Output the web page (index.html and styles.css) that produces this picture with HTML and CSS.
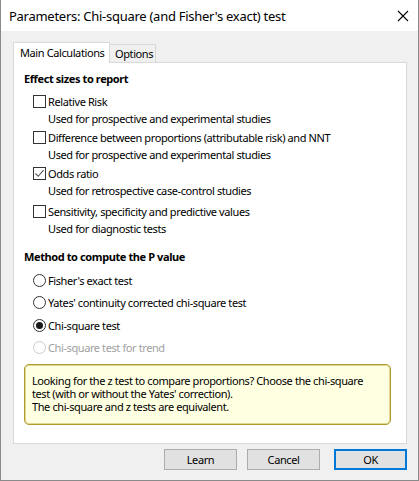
FILE: index.html
```html
<!DOCTYPE html>
<html>
<head>
<meta charset="utf-8">
<link rel="stylesheet" href="styles.css">
</head>
<body>
<div class="window">
  <div class="titlebar">
    <span class="title">Parameters: Chi-square (and Fisher's exact) test</span>
    <svg class="close" width="12" height="12" viewBox="0 0 12 12"><path d="M1 1 L11 11 M11 1 L1 11" stroke="#000" stroke-width="1.1" fill="none"/></svg>
  </div>
  <div class="client">
    <div class="tabs">
      <div class="tab active">Main Calculations</div>
      <div class="tab">Options</div>
    </div>
    <div class="panel">
      <div class="heading">Effect sizes to report</div>
      <div class="group">
        <div class="row"><span class="check"></span>Relative Risk</div>
        <div class="desc">Used for prospective and experimental studies</div>
      </div>
      <div class="group">
        <div class="row"><span class="check"></span>Difference between proportions (attributable risk) and NNT</div>
        <div class="desc">Used for prospective and experimental studies</div>
      </div>
      <div class="group">
        <div class="row"><span class="check checked"><svg width="11" height="11" viewBox="0 0 11 11"><path d="M1.5 5.5 L4.2 8.3 L9.6 2.2" stroke="#555" stroke-width="1.1" fill="none"/></svg></span>Odds ratio</div>
        <div class="desc">Used for retrospective case-control studies</div>
      </div>
      <div class="group last">
        <div class="row"><span class="check"></span>Sensitivity, specificity and predictive values</div>
        <div class="desc">Used for diagnostic tests</div>
      </div>
      <div class="heading second">Method to compute the P value</div>
      <div class="radios">
        <div class="radio-row"><span class="radio"></span>Fisher's exact test</div>
        <div class="radio-row"><span class="radio"></span>Yates' continuity corrected chi-square test</div>
        <div class="radio-row"><span class="radio on"></span>Chi-square test</div>
        <div class="radio-row disabled"><span class="radio"></span>Chi-square test for trend</div>
      </div>
      <div class="note">
        <div class="line">Looking for the z test to compare proportions? Choose the chi-square</div>
        <div class="line">test (with or without the Yates' correction).</div>
        <div class="line">The chi-square and z tests are equivalent.</div>
      </div>
    </div>
    <div class="buttons">
      <button class="btn">Learn</button>
      <button class="btn">Cancel</button>
      <button class="btn default">OK</button>
    </div>
  </div>
</div>
</body>
</html>
```
FILE: styles.css
```css
* { box-sizing: border-box; }
html, body { margin: 0; padding: 0; }
body {
  width: 419px;
  height: 481px;
  font-family: "Noto Sans", "Open Sans", sans-serif;
  font-size: 11px;
  letter-spacing: -0.4px;
  color: #000;
  background: #f0f0f0;
}
.window {
  width: 419px;
  height: 481px;
  border-left: 1px solid #8a8a8a;
  border-right: 1px solid #8a8a8a;
  border-bottom: 1px solid #8a8a8a;
  display: flex;
  flex-direction: column;
  background: #f0f0f0;
}
.titlebar {
  height: 31px;
  background: #fff;
  display: flex;
  align-items: center;
  padding-left: 8px;
  padding-right: 9px;
  flex: none;
}
.title {
  font-size: 13px;
  letter-spacing: -0.27px;
  flex: 1;
  white-space: nowrap;
}
.close { display: block; }
.client {
  flex: 1;
  display: flex;
  flex-direction: column;
  padding: 11px 11px 0 12px;
}
.tabs {
  display: flex;
  align-items: flex-end;
  height: 20px;
  position: relative;
  z-index: 1;
}
.tab {
  height: 18px;
  width: 47px;
  padding: 0 0 0 5px;
  border: 1px solid #d9d9d9;
  border-bottom: none;
  background: #f0f0f0;
  line-height: 17px;
  white-space: nowrap;
  margin-left: -1px;
}
.tab.active {
  height: 21px;
  width: 97px;
  margin-bottom: -1px;
  margin-left: 0;
  background: #fff;
  padding: 0 0 0 6px;
  line-height: 19px;
}
.panel {
  height: 382px;
  width: 394px;
  background: #fff;
  border: 1px solid #d9d9d9;
  padding: 8px 0 0 10px;
}
.heading {
  font-weight: bold;
  line-height: 16px;
  height: 16px;
  margin-bottom: 6px;
}
.group { margin-bottom: 2px; }
.group.last { margin-top: 4px; }
.row, .desc {
  height: 17px;
  line-height: 17px;
  white-space: nowrap;
}
.row { display: flex; align-items: center; padding-left: 9px; }
.desc { padding-left: 24px; }
.check {
  width: 13px;
  height: 13px;
  border: 1px solid #333;
  background: #fff;
  margin-right: 2px;
  flex: none;
  display: flex;
  align-items: center;
  justify-content: center;
}
.check svg { display: block; }
.heading.second { margin-top: 12px; margin-bottom: 4px; }
.radio-row {
  height: 22.5px;
  display: flex;
  align-items: center;
  padding-left: 9px;
  white-space: nowrap;
}
.radio {
  width: 13px;
  height: 13px;
  border: 1px solid #333;
  border-radius: 50%;
  background: #fff;
  margin-right: 2px;
  flex: none;
  display: flex;
  align-items: center;
  justify-content: center;
}
.radio.on::after {
  content: "";
  width: 7px;
  height: 7px;
  border-radius: 50%;
  background: #1a1a1a;
}
.disabled { color: #a0a0a0; }
.disabled .radio { border-color: #cccccc; }
.note {
  margin-top: 5px;
  width: 367px;
  height: 61px;
  background: #ffffe1;
  border: 1px solid #b09a30;
  border-radius: 5px;
  box-shadow: inset 0 0 0 1px #e0d890;
  padding: 9px 7px 0 7px;
}
.line {
  height: 13px;
  line-height: 13px;
  white-space: nowrap;
}
.buttons {
  display: flex;
  justify-content: flex-end;
  gap: 10px;
  margin-top: 5px;
}
.btn {
  width: 73px;
  height: 21px;
  font-family: inherit;
  font-size: 11px;
  letter-spacing: -0.4px;
  background: #e1e1e1;
  border: 1px solid #adadad;
  padding: 0;
  color: #000;
}
.btn.default {
  margin-left: 4px;
  border: 2px solid #0078d7;
}
```
